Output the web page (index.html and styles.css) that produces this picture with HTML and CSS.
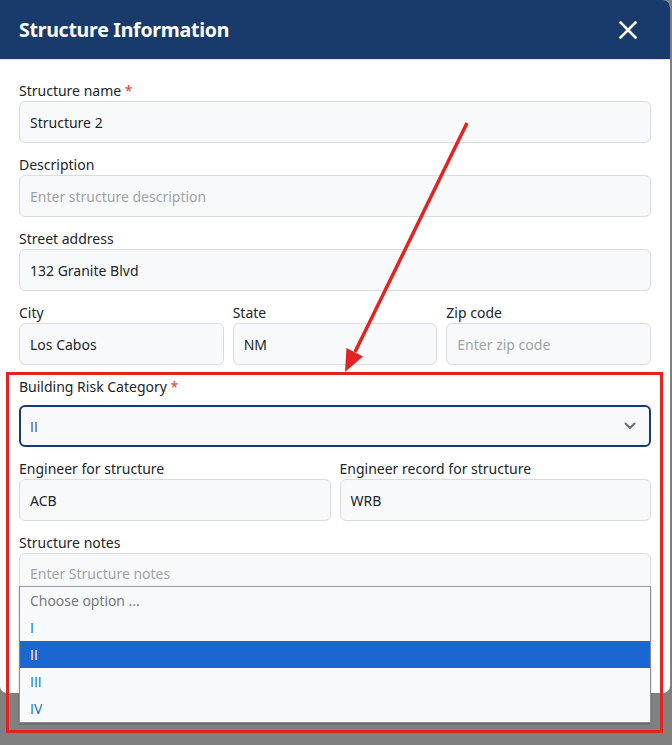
FILE: index.html
```html
<!DOCTYPE html>
<html lang="en">
<head>
<meta charset="utf-8">
<title>Structure Information</title>
<link rel="stylesheet" href="styles.css">
</head>
<body>
<div class="modal">
  <div class="modal-header">
    <h1 class="modal-title">Structure Information</h1>
    <button class="close-btn" aria-label="Close">
      <svg width="18" height="18" viewBox="0 0 18 18"><path d="M1.5 1.5 L16.5 16.5 M16.5 1.5 L1.5 16.5" stroke="#fff" stroke-width="2.6" stroke-linecap="square" fill="none"/></svg>
    </button>
  </div>
  <div class="modal-body">
    <div class="field">
      <label class="label">Structure name <span class="req">*</span></label>
      <div class="input">Structure 2</div>
    </div>
    <div class="field">
      <label class="label">Description</label>
      <div class="input placeholder">Enter structure description</div>
    </div>
    <div class="field">
      <label class="label">Street address</label>
      <div class="input">132 Granite Blvd</div>
    </div>
    <div class="row three">
      <div class="field">
        <label class="label">City</label>
        <div class="input">Los Cabos</div>
      </div>
      <div class="field">
        <label class="label">State</label>
        <div class="input">NM</div>
      </div>
      <div class="field">
        <label class="label">Zip code</label>
        <div class="input placeholder">Enter zip code</div>
      </div>
    </div>
    <div class="field">
      <label class="label label-select">Building Risk Category <span class="req">*</span></label>
      <div class="input select">
        <span class="roman">II</span>
        <svg class="chevron" width="12" height="8" viewBox="0 0 12 8"><path d="M1.5 1.5 L6 6 L10.5 1.5" stroke="#6b7079" stroke-width="2" fill="none" stroke-linecap="round" stroke-linejoin="round"/></svg>
      </div>
    </div>
    <div class="row two">
      <div class="field">
        <label class="label">Engineer for structure</label>
        <div class="input">ACB</div>
      </div>
      <div class="field">
        <label class="label">Engineer record for structure</label>
        <div class="input">WRB</div>
      </div>
    </div>
    <div class="field notes">
      <label class="label">Structure notes</label>
      <div class="input textarea placeholder">Enter Structure notes</div>
      <ul class="dropdown">
        <li class="opt muted">Choose option ...</li>
        <li class="opt">I</li>
        <li class="opt active">II</li>
        <li class="opt">III</li>
        <li class="opt">IV</li>
      </ul>
    </div>
  </div>
</div>
<svg class="annotation" width="672" height="745" viewBox="0 0 672 745">
  <rect x="7.5" y="373.5" width="654" height="358" fill="none" stroke="#e32322" stroke-width="3"/>
  <line x1="467" y1="123" x2="355" y2="352" stroke="#e32322" stroke-width="3.5"/>
  <polygon points="345,372 363,356.5 346.5,348" fill="#e32322"/>
</svg>
</body>
</html>
```

FILE: styles.css
```css
* { box-sizing: border-box; }
html, body {
  margin: 0;
  padding: 0;
  background: #808080;
  width: 672px;
  height: 745px;
  overflow: hidden;
  font-family: "Noto Sans", "Open Sans", sans-serif;
  color: #212529;
}
.modal {
  position: relative;
  width: 670px;
  height: 693px;
  background: #ffffff;
  border-radius: 0 7px 7px 7px;
}
.modal-header {
  height: 60px;
  background: #193b6c;
  border-radius: 0 7px 0 0;
  display: flex;
  align-items: center;
  justify-content: space-between;
  padding: 0 33px 0 19px;
  border-bottom: 1px solid #dfe3e8;
}
.modal-title {
  margin: 0;
  color: #ffffff;
  font-size: 19.5px;
  font-weight: 700;
  letter-spacing: -0.25px;
}
.close-btn {
  background: none;
  border: 0;
  padding: 0;
  width: 18px;
  height: 18px;
  display: flex;
  cursor: pointer;
}
.modal-body {
  padding: 21px 19px 0 19px;
  display: flex;
  flex-direction: column;
  gap: 12px;
}
.field {
  display: flex;
  flex-direction: column;
  min-width: 0;
}
.label {
  font-size: 14px;
  line-height: 20px;
  height: 20px;
  color: #212529;
}
.label-select { margin-bottom: 8px; }
.req { color: #e03a3a; }
.input {
  height: 42px;
  background: #f8f9fa;
  border: 1px solid #d9dce0;
  border-radius: 6px;
  padding: 0 10px;
  display: flex;
  align-items: center;
  font-size: 14px;
  color: #212529;
}
.placeholder { color: #9ea3a8; }
.select {
  border: 2px solid #193b6c;
  padding: 0 9px;
  justify-content: space-between;
  color: #4a4f55;
}
.roman { font-family: "Open Sans", "Liberation Sans", sans-serif; }
.chevron { margin-right: 4px; }
.row {
  display: grid;
  gap: 9px;
}
.row.three { grid-template-columns: 1fr 1fr 1fr; }
.row.two { grid-template-columns: 1fr 1fr; }
.notes { position: relative; }
.textarea {
  height: 80px;
  align-items: flex-start;
  padding-top: 10px;
}
.dropdown {
  position: absolute;
  left: 0;
  right: 0;
  top: 53px;
  margin: 0;
  padding: 0;
  list-style: none;
  background: #f8f9fa;
  border: 1px solid #8a8d91;
  border-top-color: #9a9da1;
  box-shadow: 0 1px 2px rgba(0,0,0,0.25);
  font-family: "Open Sans", "Liberation Sans", sans-serif;
}
.opt {
  height: 27px;
  line-height: 27px;
  padding-left: 10px;
  font-size: 14px;
  color: #1b67d0;
}
.opt.muted { color: #6c7278; }
.opt.active {
  background: #1b67d1;
  color: #ffffff;
}
.annotation {
  position: absolute;
  left: 0;
  top: 0;
  pointer-events: none;
}
```
